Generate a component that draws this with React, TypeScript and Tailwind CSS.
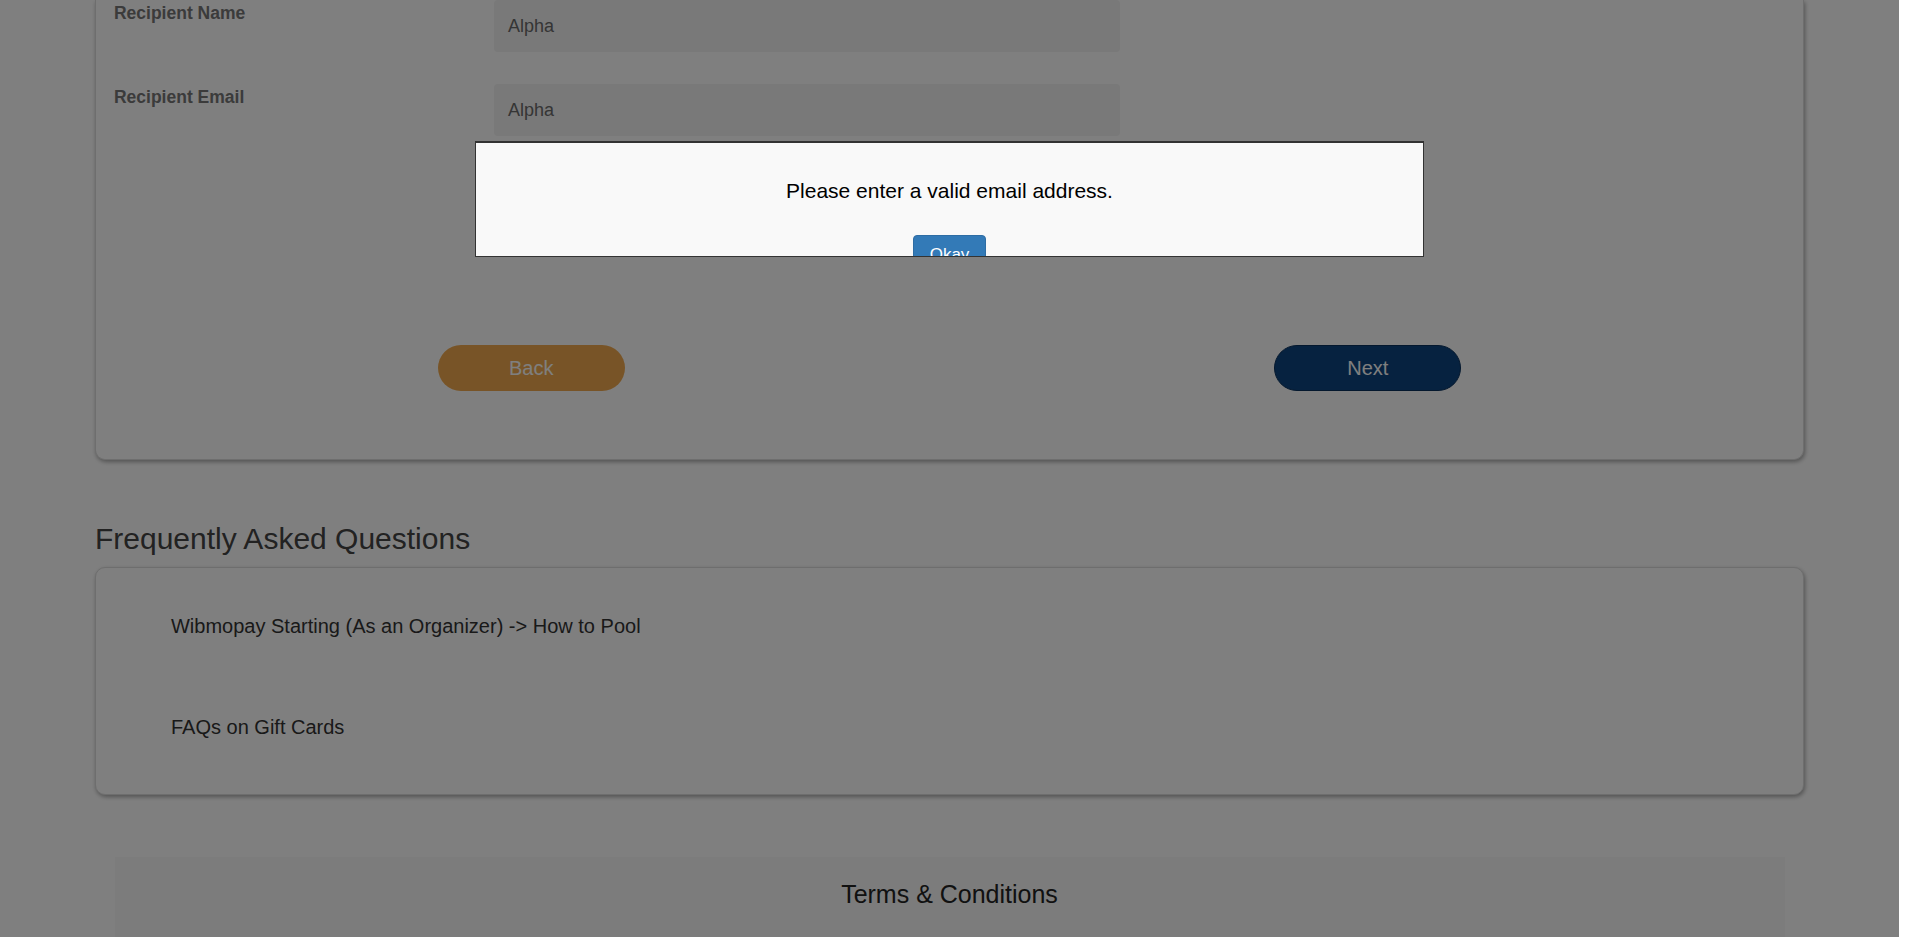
import React from 'react';

const font = { fontFamily: '"Liberation Sans", Arial, Helvetica, sans-serif' };

const FieldRow = ({ label, value }: { label: string; value: string }) => (
  <div className="flex items-start">
    <div className="w-[381px] pl-px pt-px text-[17.5px] leading-6 font-bold text-[#777]">{label}</div>
    <div className="w-[626px] h-[52px] rounded-[4px] bg-[#f2f2f2] px-[14px] flex items-center text-[18px] text-[#6a6a6a]">
      {value}
    </div>
  </div>
);

export default function App() {
  return (
    <div className="flex h-[937px] overflow-hidden bg-white" style={font}>
      <div className="relative w-[1899px] shrink-0">
        {/* Page, scrolled part way down */}
        <div className="w-[90%] mx-auto">
          {/* Form card (top is scrolled off) */}
          <div className="bg-white border-x border-b border-[#dcdcdc] rounded-b-[10px] shadow-[1px_2px_4px_rgba(0,0,0,0.35)] px-[17px] pb-[68px]">
            <div className="flex flex-col gap-[32px]">
              <FieldRow label="Recipient Name" value="Alpha" />
              <FieldRow label="Recipient Email" value="Alpha" />
            </div>
            <div className="grid grid-cols-2 mt-[209px]">
              <div className="flex justify-center">
                <button className="w-[187px] h-[46px] rounded-full bg-[#f0a94e] text-white text-[20px]">Back</button>
              </div>
              <div className="flex justify-center">
                <button className="w-[187px] h-[46px] rounded-full bg-[#0d4580] border border-[#08305c] text-white text-[20px]">Next</button>
              </div>
            </div>
          </div>

          {/* FAQ */}
          <h2 className="mt-[62px] mb-[12px] text-[30px] leading-[33px] text-[#444]">Frequently Asked Questions</h2>
          <div className="bg-white border border-[#dcdcdc] rounded-[10px] shadow-[1px_2px_4px_rgba(0,0,0,0.35)] pt-[44px] pb-[53px] pl-[75px] flex flex-col gap-[73px]">
            <div className="text-[20px] leading-[28px] text-[#333]">Wibmopay Starting (As an Organizer) -&gt; How to Pool</div>
            <div className="text-[20px] leading-[28px] text-[#333]">FAQs on Gift Cards</div>
          </div>

          {/* Terms */}
          <div className="mt-[62px] w-[1670px] mx-auto bg-[#f8f8f8] pt-[24px] h-[200px]">
            <h3 className="text-center text-[25px] leading-[27px] text-[#222]">Terms &amp; Conditions</h3>
          </div>
        </div>

        {/* Modal backdrop */}
        <div className="absolute inset-0 bg-black/50" />

        {/* Alert dialog */}
        <div className="absolute left-[475px] top-[141px] w-[949px] h-[116px] overflow-hidden bg-[#f9f9f9] border border-t-2 border-[#333] text-center">
          <p className="pt-[33px] text-[21px] leading-[30px] text-black">Please enter a valid email address.</p>
          <button className="mt-[29px] w-[73px] pt-[7px] pb-[7px] rounded-[4px] bg-[#337ab7] border border-[#2e6da4] text-white text-[17px] leading-[24px]">
            Okay
          </button>
        </div>
      </div>
      <div className="flex-1 bg-white" />
    </div>
  );
}
